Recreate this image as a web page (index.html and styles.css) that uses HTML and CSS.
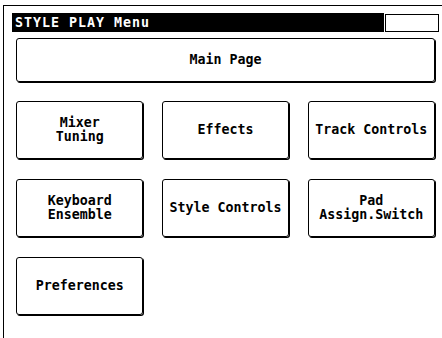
FILE: index.html
```html
<!DOCTYPE html>
<html lang="en">
<head>
  <meta charset="UTF-8">
  <meta name="viewport" content="width=device-width, initial-scale=1.0">
  <title>STYLE PLAY Menu</title>
  <link rel="stylesheet" href="styles.css">
</head>
<body>
  <div class="frame">
    <div class="titlebar">
      <div class="title">STYLE PLAY Menu</div>
      <div class="title-box"></div>
    </div>
    <div class="menu">
      <div class="btn btn-main">Main Page</div>
      <div class="grid">
        <div class="btn">Mixer<br>Tuning</div>
        <div class="btn">Effects</div>
        <div class="btn">Track Controls</div>
        <div class="btn">Keyboard<br>Ensemble</div>
        <div class="btn">Style Controls</div>
        <div class="btn">Pad<br>Assign.Switch</div>
        <div class="btn">Preferences</div>
      </div>
    </div>
  </div>
</body>
</html>
```

FILE: styles.css
```css
body, html {
  margin: 0;
  padding: 0;
  background: #fff;
  overflow: hidden;
}
body {
  font-family: "DejaVu Sans Mono", monospace;
  font-weight: bold;
  font-size: 13.3px;
  color: #000;
}
.frame {
  margin: 5px 0 0 3px;
  height: 333px;
  box-sizing: border-box;
  border-left: 1px solid #000;
  border-top: 1px solid #000;
  padding: 7px 3px 0 8px;
}
.titlebar {
  display: flex;
  gap: 1px;
  height: 19px;
}
.title {
  flex: 1;
  background: #000;
  color: #fff;
  padding-left: 3px;
  line-height: 20px;
  letter-spacing: 1px;
  white-space: nowrap;
}
.title-box {
  width: 54px;
  margin-top: 1px;
  box-sizing: border-box;
  border: 1px solid #000;
}
.menu {
  padding: 0 4px 0 4px;
}
.btn {
  display: flex;
  align-items: center;
  justify-content: center;
  text-align: center;
  line-height: 14px;
  height: 58px;
  box-sizing: border-box;
  border: 1px solid #000;
  border-radius: 3px;
  box-shadow: 1px 1px 0 #000;
  white-space: nowrap;
}
.btn-main {
  height: 44px;
  margin-top: 6px;
}
.grid {
  display: grid;
  grid-template-columns: repeat(3, 1fr);
  column-gap: 18.5px;
  row-gap: 20px;
  margin-top: 19px;
}
```
